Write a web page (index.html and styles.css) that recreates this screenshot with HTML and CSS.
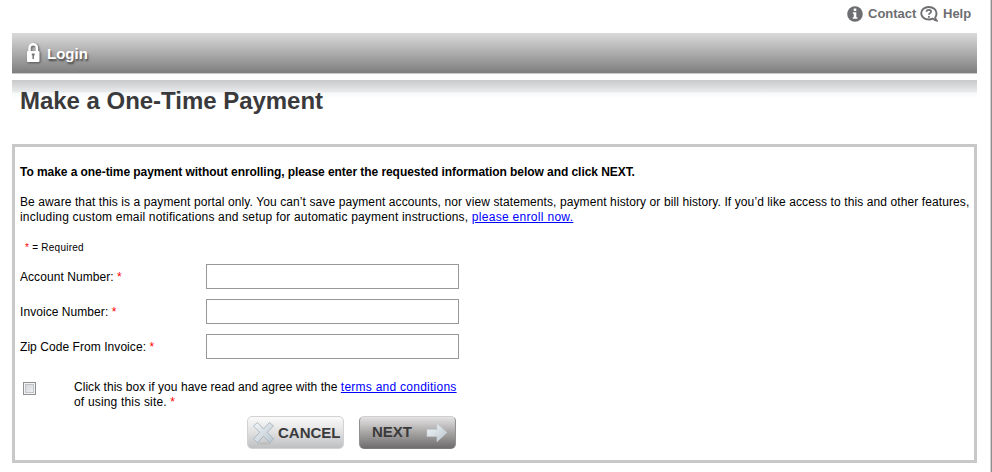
FILE: index.html
```
<!DOCTYPE html>
<html lang="en">
<head>
  <meta charset="UTF-8" />
  <title>Make a One-Time Payment</title>
  <link rel="stylesheet" href="styles.css">
</head>
<body>
  <div class="page">
    <div class="top-links">
      <svg width="16" height="16" viewBox="0 0 16 16">
        <circle cx="8" cy="8" r="7.8" fill="#6d6e71" />
        <path d="M6.7 2.6h2.6v2.3H6.7zM5.8 6.2h3.5v5h1.1v1.5H5.7v-1.5h1.1V7.7h-1z" fill="#fff" />
      </svg>
      <a class="contact">Contact</a>
      <svg width="18" height="16" viewBox="0 0 18 16">
        <path d="M8.800 1C4.500 1 1.200 3.600 1.200 7.200s3.300 6.300 7.600 6.300c1.500 0 2.900-.3 4-.9 1 .9 2.300 1.700 3.700 1.900-.8-.8-1.200-1.800-1.300-3 .8-1.100 1.300-2.600 1.300-4.200C16.500 3.600 13.100 1 8.800 1z" fill="#fff" stroke="#6d6e71" stroke-width="1.9" />
        <path d="M6.500 5.700c.1-1.300 1-1.900 2.300-1.900 1.400 0 2.300.7 2.300 1.800 0 1.600-2.200 1.500-2.200 3.200M8.900 10v1.700" fill="none" stroke="#6d6e71" stroke-width="1.700" />
      </svg>
      <a class="help">Help</a>
    </div>

    <div class="nav">
      <svg class="lock" width="18" height="24" viewBox="0 0 18 24">
        <path d="M4.500 11V7a3.700 3.700 0 0 1 7.400 0v4" fill="none" stroke="#fff" stroke-width="2.500" />
        <rect x="2" y="10" width="12.500" height="11" rx="1" fill="#fff" />
        <path d="M6.800 12.500h2.800v2H9V18H7.500v-3.500h-.7z" fill="#777" />
      </svg>
      <a class="login">Login</a>
    </div>

    <div class="title-bar">
      <h1>Make a One-Time Payment</h1>
    </div>

    <div class="panel">
      <p class="lead">To make a one-time payment without enrolling, please enter the requested information below and click NEXT.</p>
      <p class="note"><span class="note-first">Be aware that this is a payment portal only. You can’t save payment accounts, nor view statements, payment history or bill history. If you’d like access to this and other features,</span><br>
        <span class="note-second">including custom email notifications and setup for automatic payment instructions, <a href="#" class="enroll">please enroll now.</a></span></p>
      <p class="required"><span class="star">*</span> = Required</p>

      <div class="row">
        <label for="account">Account Number: <span class="star">*</span></label>
        <input type="text" id="account" />
      </div>
      <div class="row">
        <label for="invoice">Invoice Number: <span class="star">*</span></label>
        <input type="text" id="invoice" />
      </div>
      <div class="row">
        <label for="zip">Zip Code From Invoice: <span class="star">*</span></label>
        <input type="text" id="zip" />
      </div>

      <div class="agree">
        <input type="checkbox" id="terms" />
        <label for="terms">Click this box if you have read and agree with the <a href="#" class="terms-link">terms and conditions</a><br>
          <span class="terms-end">of using this site. <span class="star">*</span></span></label>
      </div>

      <div class="buttons">
        <button class="cancel">
          <svg width="24" height="26" viewBox="0 0 24 26">
            <defs>
              <linearGradient id="ice" x1="0" y1="0" x2="1" y2="1">
                <stop offset="0" stop-color="#f4f8fa" />
                <stop offset="1" stop-color="#b9c5ce" />
              </linearGradient>
            </defs>
            <ellipse cx="12" cy="23.500" rx="7" ry="1.300" fill="#b5b5b5" opacity=".6" />
            <path d="M5.500 2.500l6 6.500 6-6.500 4 3.500-6.300 6.300 6.300 6.700-4 3.700-6-6.500-6 6.500-4-3.700 6.300-6.700-6.300-6.300z" fill="url(#ice)" stroke="#9eacb5" stroke-width=".8" />
          </svg>
          <span>CANCEL</span>
        </button>
        <button class="next">
          <span>NEXT</span>
          <svg width="22" height="22" viewBox="0 0 22 22">
            <path d="M1 7.500h10V1.500l10 9-10 9.300v-5.300H1z" fill="url(#ice)" stroke="#c3ccd3" stroke-width=".6" />
          </svg>
        </button>
      </div>
    </div>
  </div>
</body>
</html>
```
FILE: styles.css
```
body {
  margin: 0;
  background-color: #fff;
  font-family: Arial, "Liberation Sans", sans-serif;
  font-size: 12px;
  line-height: 15px;
  color: #000;
}
.page {
  box-sizing: border-box;
  width: 992px;
  height: 472px;
  padding: 0 13px 0 12px;
  border-right: 1px solid #8f8f8f;
  box-shadow: inset -1px 0 #d0d0d0;
  overflow: hidden;
}
.page p,
.page h1 {
  margin: 0;
  white-space: nowrap;
}
.top-links {
  display: flex;
  align-items: center;
  height: 27px;
  padding: 0 0 6px 835px;
  font-size: 13px;
  font-weight: bold;
  color: #6d6e71;
}
.top-links svg {
  flex: none;
}
.contact {
  width: 48px;
  margin: 0 4px 0 5px;
}
.help {
  margin-left: 5px;
}
.nav {
  display: flex;
  align-items: center;
  height: 40px;
  width: 965px;
  background: linear-gradient(#dadada, #c4c4c4 25%, #7e7e7e);
  border-bottom: 1px solid #c8c8c8;
}
.lock {
  margin-left: 13px;
  filter: drop-shadow(1px 1px 1px #555);
}
.login {
  margin-left: 4px;
  font-size: 15px;
  font-weight: bold;
  color: #fff;
  text-shadow: 1px 2px 2px #444;
}
.title-bar {
  width: 965px;
  height: 64px;
  margin-top: 6px;
  background: linear-gradient(#c9c9c9, #e9ebed 12px, #f7f9f9 13px, #fff 19px);
}
h1 {
  padding: 7px 0 0 8px;
  font-size: 24px;
  line-height: 28px;
  letter-spacing: -0.03px;
  color: #3a3a3c;
}
.panel {
  box-sizing: border-box;
  width: 965px;
  height: 319px;
  padding: 18px 5px 0;
  border: 3px solid #c8c8c8;
}
.lead {
  font-weight: bold;
  letter-spacing: -0.06px;
}
.page .note {
  margin-top: 15px;
}
.note-first {
  letter-spacing: 0.1px;
}
.note-second {
  letter-spacing: 0.18px;
}
.enroll {
  letter-spacing: 0.3px;
}
.page .required {
  margin: 15px 0 9px 5px;
  font-size: 10px;
  letter-spacing: 0.25px;
}
.star {
  color: #f00;
}
a[href] {
  color: #00f;
}
.row {
  display: flex;
  align-items: center;
  height: 25px;
  margin-bottom: 10px;
}
.row label {
  width: 186px;
  padding-top: 2px;
  letter-spacing: 0.06px;
}
.row input {
  box-sizing: border-box;
  width: 253px;
  height: 25px;
  margin: 0;
  padding: 0 4px;
  border: 1px solid #999;
}
.agree {
  display: flex;
  align-items: flex-start;
  height: 30px;
  margin-top: 20px;
  white-space: nowrap;
}
.agree label {
  padding-top: 1px;
  letter-spacing: 0.04px;
}
.terms-link {
  letter-spacing: 0.25px;
}
.terms-end {
  letter-spacing: 0.18px;
}
.agree input {
  appearance: none;
  box-sizing: border-box;
  width: 13px;
  height: 13px;
  margin: 3px 38px 0 3px;
  border: 1px solid #8e8f8f;
  background: linear-gradient(135deg, #cbcfd5, #f6f6f6);
  box-shadow: inset 0 0 0 1px #f4f4f4, inset 0 0 0 2px #c0c4c9;
}
.buttons {
  display: flex;
  gap: 15px;
  margin: 7px 0 0 227px;
}
.buttons button {
  box-sizing: border-box;
  display: flex;
  align-items: center;
  width: 97px;
  height: 33px;
  padding: 0;
  border: 1px solid #d2d2d2;
  border-radius: 5px;
  font-family: Arial, "Liberation Sans", sans-serif;
  font-size: 15px;
  font-weight: bold;
  color: #3a3a3c;
}
.buttons .cancel {
  padding-left: 4px;
  background: linear-gradient(#fafafa, #e0e0e1 50%, #bfc0c2);
}
.cancel span {
  margin-left: 2px;
}
.buttons .next {
  padding-left: 12px;
  border-color: #d0d0d0 #909090 #7c7c7c;
  background: linear-gradient(#e4e3e3, #a8a5a5 50%, #6f6d6d);
}
.next span {
  margin-top: -2px;
}
.next svg {
  margin-left: 14px;
}
```
